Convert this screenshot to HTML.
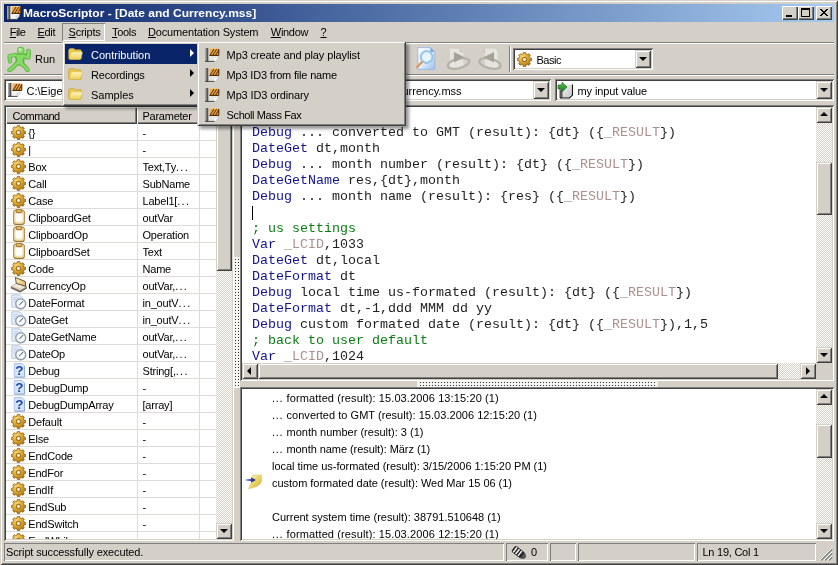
<!DOCTYPE html>
<html><head><meta charset="utf-8"><title>MacroScriptor</title>
<style>
*{box-sizing:border-box;margin:0;padding:0}
html,body{width:838px;height:565px;overflow:hidden;background:#d4d0c8}
body{position:relative;font:11px "Liberation Sans",sans-serif;color:#000}
#root{position:absolute;left:0;top:0;width:838px;height:565px;will-change:transform}
.a{position:absolute}
u{text-decoration:underline;text-underline-offset:1px}
.win{left:0;top:0;width:838px;height:565px;background:#d4d0c8;
 box-shadow:inset 1px 1px #d4d0c8,inset -1px -1px #404040,inset 2px 2px #fff,inset -2px -2px #808080}
.title{left:4px;top:4px;width:830px;height:18px;background:linear-gradient(90deg,#0a246a 0%,#a6caf0 100%)}
.title .t{left:18px;top:1px;color:#fff;font:bold 11px/16px "Liberation Sans",sans-serif;white-space:nowrap;transform:scaleX(1.091);transform-origin:0 0}
.cap{top:6px;width:16px;height:14px;background:#d4d0c8;
 box-shadow:inset 1px 1px #fff,inset -1px -1px #404040,inset -2px -2px #808080}
.menu span{position:absolute;top:26px;line-height:13px;white-space:nowrap}
.sunk1{box-shadow:inset 1px 1px #808080,inset -1px -1px #fff}
.etchh{height:2px;border-top:1px solid #808080;border-bottom:1px solid #fff}
.etchv{width:2px;border-left:1px solid #808080;border-right:1px solid #fff}
.field{background:#fff;box-shadow:inset 1px 1px #808080,inset -1px -1px #fff,inset 2px 2px #404040,inset -2px -2px #d4d0c8}
.btn{background:#d4d0c8;box-shadow:inset 1px 1px #d4d0c8,inset -1px -1px #404040,inset 2px 2px #fff,inset -2px -2px #808080}
.track{background:repeating-conic-gradient(#fff 0 25%,#d4d0c8 0 50%) 0 0/2px 2px}
.arr{width:0;height:0;border:4px solid transparent}
.txt{white-space:nowrap;line-height:13px}
.popup{background:#d4d0c8;box-shadow:inset 1px 1px #d4d0c8,inset -1px -1px #404040,inset 2px 2px #fff,inset -2px -2px #808080,3px 3px 3px rgba(0,0,0,.4)}
.mi{position:absolute;left:2px;height:20px;line-height:20px;white-space:nowrap}
.mi svg{position:absolute;top:2px}
.mi span{top:1px}
.hdr{background:#d4d0c8;height:17px;top:0;box-shadow:inset 1px 1px #fff,inset -1px -1px #404040,inset -2px -2px #808080;line-height:18px;padding-left:6px;white-space:nowrap;overflow:hidden}
.lrow{position:absolute;left:0;width:210px;height:17px;border-bottom:1px solid #dfdcd5;line-height:17px;white-space:nowrap}
.lrow .li{position:absolute;top:1px}
.lrow .ln{position:absolute;left:22.300px;top:1px;letter-spacing:-.2px}
.lrow .lp{position:absolute;left:136.500px;top:1px;width:58px;overflow:hidden;letter-spacing:-.2px}
.vgl{width:1px;background:#dfdcd5}
.cl{position:absolute;left:10px;height:16px;font:13.33px/16px "Liberation Mono",monospace;white-space:pre;color:#222}
.k{color:#14148c}.v{color:#ac9090}.c{color:#0c7c14}
.ol{position:absolute;left:30px;height:17px;line-height:17px;white-space:pre}
.sp{top:543px;height:18px;box-shadow:inset 1px 1px #808080,inset -1px -1px #fff}

</style></head>
<body>
<svg width="0" height="0" style="position:absolute">
<defs>
<linearGradient id="lid" x1="0" y1="0" x2="1" y2="0"><stop offset="0" stop-color="#fbf0b8"/><stop offset="1" stop-color="#e6b460"/></linearGradient>
<pattern id="grip" width="3" height="3" patternUnits="userSpaceOnUse"><rect x="1" y="1" width="1" height="1" fill="#303030"/><rect x="2" y="2" width="1" height="1" fill="#fff"/></pattern>
<radialGradient id="gg" cx=".38" cy=".32" r=".75"><stop offset="0" stop-color="#f6d77c"/><stop offset=".5" stop-color="#dba632"/><stop offset="1" stop-color="#9a6810"/></radialGradient>
<linearGradient id="sp" x1="0" y1="0" x2="1" y2="0"><stop offset="0" stop-color="#b8b8b8"/><stop offset=".55" stop-color="#707070"/><stop offset="1" stop-color="#303030"/></linearGradient>
<linearGradient id="fo" x1="0" y1="0" x2="0" y2="1"><stop offset="0" stop-color="#fff6b8"/><stop offset="1" stop-color="#ecd05c"/></linearGradient>
<radialGradient id="cb" cx=".5" cy=".5" r=".6"><stop offset="0" stop-color="#fffaf0"/><stop offset=".6" stop-color="#f6e6c4"/><stop offset="1" stop-color="#e6c88c"/></radialGradient>
<symbol id="i-gear" viewBox="0 0 15 15">
 <path d="M6.15 1.86L6.37 0.39L8.63 0.39L8.85 1.86L10.53 2.55L11.73 1.68L13.32 3.27L12.45 4.47L13.14 6.15L14.61 6.37L14.61 8.63L13.14 8.85L12.45 10.53L13.32 11.73L11.73 13.32L10.53 12.45L8.85 13.14L8.63 14.61L6.37 14.61L6.15 13.14L4.47 12.45L3.27 13.32L1.68 11.73L2.55 10.53L1.86 8.85L0.39 8.63L0.39 6.37L1.86 6.15L2.55 4.47L1.68 3.27L3.27 1.68L4.47 2.55z" fill="url(#gg)" stroke="#94651a" stroke-width=".8" stroke-linejoin="round"/>
 <circle cx="7.500" cy="7.500" r="2.700" fill="#a9761c"/>
 <circle cx="7.500" cy="7.500" r="1.400" fill="#fffdf0"/>
</symbol>
<symbol id="i-clip" viewBox="0 0 12 16">
 <rect x=".6" y="1.200" width="10.800" height="14.200" rx="1.600" fill="url(#cb)" stroke="#b48a3e" stroke-width="1"/>
 <rect x="2.600" y="4.600" width="6.800" height="8" rx="1" fill="#fffefa"/>
 <path d="M1.200 14.300q.4 1.100 1.500 1.100h6.600q1.100 0 1.500-1.100" fill="none" stroke="#94701f" stroke-width=".9"/>
 <path d="M3 1.200c0-.8.700-.9 1.300-.9h3.400c.6 0 1.300.1 1.300.9L8.200 3.700H3.800z" fill="#dcb566" stroke="#8a5c16" stroke-width=".8" stroke-linejoin="round"/>
</symbol>
<symbol id="i-cur" viewBox="0 0 17 16">
 <path d="M1.200 9.500L10.100 13.400 16.500 9.800V11.400L10.100 15.200 1.200 11.200z" fill="#7c6e60" stroke="#5e5246" stroke-width=".6" stroke-linejoin="round"/>
 <path d="M1.200 9.500L6.300 6.300 16.500 9.800 10.100 13.400z" fill="#f2eadc" stroke="#a4927c" stroke-width=".6" stroke-linejoin="round"/>
 <path d="M4 9.600l5.800 2.300 3.600-2" fill="none" stroke="#d8ccb8" stroke-width=".8"/>
 <path d="M5.300 .5L15.200 4.400 15.800 9.300 6.300 6.300z" fill="url(#lid)" stroke="#4e4434" stroke-width=".9" stroke-linejoin="round"/>
</symbol>
<symbol id="i-clock" viewBox="0 0 17 16">
 <path d="M.8 .8h7.700l2.800 2.800v9.600H.8z" fill="#e4eefa" stroke="#a8bede" stroke-width=".8"/>
 <path d="M2.500 3.800h5M2.500 5.800h3.500M2.500 7.800h2" stroke="#b4c8e6" stroke-width=".8"/>
 <circle cx="9.700" cy="9.800" r="5.900" fill="#c8d0da"/>
 <circle cx="9.700" cy="9.800" r="4.900" fill="#f8fafc" stroke="#8e9cac" stroke-width="1.300"/>
 <path d="M9.700 9.800l2.300-2.700M9.700 9.800l-1.400 1" stroke="#34404c" stroke-width="1" fill="none"/>
</symbol>
<symbol id="i-q" viewBox="0 0 16 16">
 <path d="M4.300 1.500h7.700l2.500 2.500v11.200H4.300z" fill="#d6e4fa" stroke="#9cb8e4" stroke-width=".8"/>
 <path d="M14.500 4.500v10.700H5" fill="none" stroke="#86a4d6" stroke-width=".8"/>
 <text x="9.300" y="13.300" text-anchor="middle" font-family="Liberation Sans, sans-serif" font-weight="bold" font-size="13.500" fill="#1848ac">?</text>
</symbol>
<symbol id="i-folder" viewBox="0 0 15 12">
 <path d="M.6 3.200c0-1.500.6-2.500 2-2.700h2.600c.9 0 1.400.5 1.800 1.300h5c.8 0 1.300.5 1.300 1.300v6.600c0 1-.5 1.700-1.500 1.700H2.200c-1 0-1.600-.6-1.600-1.600z" fill="#e8c850" stroke="#c09a28" stroke-width=".6"/>
 <path d="M1.300 10.300L2.800 4.800c.2-.7.600-1 1.300-1h9.400c.7 0 1 .4.800 1.100l-1.300 5.300c-.2.700-.6 1.100-1.400 1.100H2.200c-.7 0-1-.4-.9-1z" fill="url(#fo)" stroke="#d8b440" stroke-width=".5"/>
</symbol>
<symbol id="i-mss" viewBox="0 0 15 14">
 <path d="M3 0h9.500v10L9.500 13.500H3z" fill="#e6e6e2"/>
 <rect x="0" y="0" width="3.300" height="13.800" fill="url(#sp)"/>
 <path d="M0 13.400h9.500" stroke="#3a3a3a" stroke-width=".9"/>
 <rect x="4.500" y=".5" width="9.300" height="7.200" fill="#f2ac4c"/>
 <path d="M5 7.500l4-6.500M7.700 7.500l4-6.500M10.400 7.500l3.300-5.400" stroke="#6a3c08" stroke-width="1.100"/>
 <path d="M4.500 7.400h9.300V1" fill="none" stroke="#3c2206" stroke-width="1"/>
 <path d="M9.300 13.200v-3.200h3.200z" fill="#fff"/>
</symbol>
<symbol id="i-mssw" viewBox="0 0 15 14">
 <path d="M3 0h9.500v10L9.500 13.500H3z" fill="#f4f4f0"/>
 <rect x="0" y="0" width="3.300" height="13.800" fill="url(#sp)"/>
 <path d="M0 13.400h9.500" stroke="#3a3a3a" stroke-width=".9"/>
 <rect x="4.500" y=".5" width="9.300" height="7.200" fill="#f2ac4c"/>
 <path d="M5 7.500l4-6.500M7.700 7.500l4-6.500M10.400 7.500l3.300-5.400" stroke="#6a3c08" stroke-width="1.100"/>
 <path d="M4.500 7.400h9.300V1" fill="none" stroke="#3c2206" stroke-width="1"/>
 <path d="M9.300 13.200v-3.200h3.200z" fill="#fff" stroke="#889" stroke-width=".4"/>
</symbol>
</defs>
</svg>

<div id="root">
<div class="a win"></div>
<!-- title bar -->
<div class="a title">
 <svg class="a" style="left:3px;top:2px" width="15" height="14"><use href="#i-mssw"/></svg>
 <div class="a t" style="left:19px">MacroScriptor - [Date and Currency.mss]</div>
</div>
<div class="a cap" style="left:782px"><div class="a" style="left:4px;top:9px;width:6px;height:2px;background:#000"></div></div>
<div class="a cap" style="left:798px"><div class="a" style="left:3px;top:2px;width:9px;height:9px;border:1px solid #000;border-top-width:2px"></div></div>
<div class="a cap" style="left:816px"><svg class="a" style="left:4px;top:3px" width="8" height="7"><path d="M0 0l7 7M1 0l7 7M7 0l-7 7M8 0l-7 7" stroke="#000" stroke-width="1"/></svg></div>
<!-- menu bar -->
<div class="a sunk1" style="left:62px;top:23px;width:43px;height:18px"></div>
<div class="menu">
 <span style="left:9.700px;letter-spacing:-.5px"><u>F</u>ile</span>
 <span style="left:37.500px;letter-spacing:-.3px"><u>E</u>dit</span>
 <span style="left:68.600px;letter-spacing:-.25px"><u>S</u>cripts</span>
 <span style="left:112px;letter-spacing:-.3px"><u>T</u>ools</span>
 <span style="left:148px;letter-spacing:-.17px"><u>D</u>ocumentation System</span>
 <span style="left:270.800px;letter-spacing:-.3px"><u>W</u>indow</span>
 <span style="left:320.500px"><u>?</u></span>
</div>
<div class="a etchh" style="left:4px;top:42px;width:830px"></div>
<!-- toolbar 1 -->
<svg class="a" style="left:7px;top:46px" width="26" height="26" viewBox="0 0 26 26">
 <g fill="none" stroke="#5cb83e" stroke-linecap="round" stroke-linejoin="round">
  <path d="M8.500 9L2.500 10 3 15.500" stroke-width="4.200"/>
  <path d="M16 10l5.500 1.500L21.500 5" stroke-width="4.600"/>
  <path d="M10 17L6 21.500 2.500 24.200" stroke-width="4.400"/>
  <path d="M13 17l5 3.500 2.500 3.500" stroke-width="4.400"/>
 </g>
 <path d="M8 8h10.500l-2 6 .5 5H8.500l1-5z" fill="#5cb83e" stroke="#5cb83e" stroke-width="1.500" stroke-linejoin="round"/>
 <circle cx="13.800" cy="4.400" r="3.700" fill="#5cb83e"/>
 <g fill="none" stroke="#86d868" stroke-linecap="round" stroke-linejoin="round">
  <path d="M8.500 9L2.500 10 3 15.500" stroke-width="2.400"/>
  <path d="M16 10l5.500 1.500L21.500 5" stroke-width="2.800"/>
  <path d="M10 17L6 21.500 2.500 24.200" stroke-width="2.600"/>
  <path d="M13 17l5 3.500 2.500 3.500" stroke-width="2.600"/>
 </g>
 <path d="M9 8.800h8.500l-2 5.500.5 4H9.500l1-4z" fill="#86d868"/>
 <circle cx="13.800" cy="4.400" r="2.800" fill="#90de72"/>
 <circle cx="13" cy="3.600" r="1.400" fill="#c0f2ae"/>
</svg>
<div class="a txt" style="left:35px;top:53px">Run</div>
<!-- toolbar icons right -->
<svg class="a" style="left:415px;top:46px" width="22" height="26" viewBox="0 0 22 26">
 <defs><linearGradient id="pg1" x1="0" y1="0" x2="1" y2="1"><stop offset="0" stop-color="#fff"/><stop offset=".5" stop-color="#e4eefc"/><stop offset="1" stop-color="#9cc0f0"/></linearGradient></defs>
 <path d="M2.800 1.600h12.500l4.500 4.500v17.200H2.800z" fill="url(#pg1)" stroke="#8fb2e8" stroke-width=".8"/>
 <path d="M15.300 1.600v4.500h4.500z" fill="#7fa6e4"/>
 <circle cx="11.600" cy="11" r="5.600" fill="#e6f6fc" stroke="#9ccbe8" stroke-width="1.700"/>
 <circle cx="11.600" cy="11" r="6.500" fill="none" stroke="#7fa8d8" stroke-width=".5"/>
 <path d="M6.800 16L2 21" stroke="#e0a060" stroke-width="2" stroke-linecap="round"/>
 <path d="M7.300 16.500L2.500 21.500" stroke="#b87838" stroke-width=".7" stroke-linecap="round"/>
</svg>
<svg class="a" style="left:446px;top:46px" width="26" height="26" viewBox="0 0 26 26">
 <path d="M3.500 2.200h10.500l3.800 3.800v17H3.500z" fill="#e6e4de" stroke="#d0ccc4" stroke-width=".6"/>
 <path d="M14 2.200v3.800h3.800" fill="#d6d2ca" stroke="#bcb8b0" stroke-width=".6"/>
 <ellipse cx="12.500" cy="17.500" rx="11" ry="4.800" fill="none" stroke="#b6b2a8" stroke-width="2.200" transform="rotate(-14 12.500 17.500)"/>
 <path d="M8 6l10.500 5.200L8 16.500z" fill="#a6a298"/>
</svg>
<svg class="a" style="left:477px;top:46px" width="26" height="26" viewBox="0 0 26 26">
 <path d="M7.500 2.200H18l3 3v17.800H7.500z" fill="#e6e4de" stroke="#d0ccc4" stroke-width=".6"/>
 <path d="M7.500 2.200v3.800H4.200" fill="#d6d2ca" stroke="#bcb8b0" stroke-width=".6"/>
 <ellipse cx="13" cy="17.500" rx="11" ry="4.800" fill="none" stroke="#b6b2a8" stroke-width="2.200" transform="rotate(14 13 17.500)"/>
 <path d="M17 6L6.500 11.200 17 16.500z" fill="#a6a298"/>
</svg>
<div class="a etchv" style="left:509px;top:46px;height:26px"></div>
<div class="a field" style="left:513px;top:48px;width:140px;height:22px">
 <svg class="a" style="left:4px;top:4px" width="15" height="15"><use href="#i-gear"/></svg>
 <div class="a txt" style="left:23.500px;top:6px;letter-spacing:-.5px">Basic</div>
 <div class="a btn" style="left:122px;top:2px;width:16px;height:18px"><div class="a arr" style="left:4px;top:7px;border-top-color:#000;border-bottom-width:0"></div></div>
</div>
<div class="a etchh" style="left:4px;top:74px;width:830px"></div>
<!-- toolbar 2 -->
<div class="a field" style="left:4px;top:79px;width:547px;height:22px">
 <svg class="a" style="left:4px;top:4px" width="15" height="14"><use href="#i-mssw"/></svg>
 <div class="a txt" style="left:22.500px;top:6px">C:\Eigene Dateien\MacroScriptor\Scripts\Samples\Date Currency\Date and Currency.mss</div>
 <div class="a btn" style="left:529px;top:2px;width:16px;height:18px"><div class="a arr" style="left:4px;top:7px;border-top-color:#000;border-bottom-width:0"></div></div>
</div>
<div class="a field" style="left:555px;top:79px;width:279px;height:22px">
 <svg class="a" style="left:2px;top:2px" width="18" height="18" viewBox="0 0 18 18">
  <defs><linearGradient id="pg2" x1="0" y1="0" x2="1" y2="1"><stop offset="0" stop-color="#f4f4f4"/><stop offset="1" stop-color="#c4c4c4"/></linearGradient>
  <linearGradient id="ga" x1="0" y1="0" x2="0" y2="1"><stop offset="0" stop-color="#58c458"/><stop offset="1" stop-color="#1c7a1c"/></linearGradient></defs>
  <path d="M2.500 3.500H15.500V14l-3 3H2.500z" fill="url(#pg2)"/>
  <rect x="2.500" y="8.500" width="3" height="8.500" fill="#5a5a5a"/>
  <path d="M12.700 16.800v-2.800h2.800z" fill="#fff"/>
  <path d="M15.500 3.500V14l-3 3H3" fill="none" stroke="#141414" stroke-width="1.100"/>
  <path d="M1 4h4V1.300l5 4.700-5 4.700V8H1z" fill="url(#ga)" stroke="#1c6a1c" stroke-width=".7" stroke-linejoin="round"/>
 </svg>
 <div class="a txt" style="left:22.500px;top:6px;letter-spacing:-.1px">my input value</div>
 <div class="a btn" style="left:261px;top:2px;width:16px;height:18px"><div class="a arr" style="left:4px;top:7px;border-top-color:#000;border-bottom-width:0"></div></div>
</div>
<!-- left list panel -->
<div class="a field" style="left:4px;top:105px;width:230px;height:436px;overflow:hidden">
 <div class="a" style="left:2px;top:2px;width:210px;height:17px">
  <div class="a hdr" style="left:0;width:131px;letter-spacing:-.5px;padding-left:6.500px">Command</div>
  <div class="a hdr" style="left:131px;width:62px;letter-spacing:-.25px;padding-left:5.500px">Parameter</div>
  <div class="a hdr" style="left:193px;width:17px;padding:0"></div>
 </div>
 <div class="a" style="left:2px;top:19px;width:210px;height:415px;overflow:hidden">
<div class="lrow" style="top:0px"><svg class="li" style="left:5px;top:1px" width="15" height="15"><use href="#i-gear"/></svg><span class="ln">{}</span><span class="lp">-</span></div>
<div class="lrow" style="top:17px"><svg class="li" style="left:5px;top:1px" width="15" height="15"><use href="#i-gear"/></svg><span class="ln">|</span><span class="lp">-</span></div>
<div class="lrow" style="top:34px"><svg class="li" style="left:5px;top:1px" width="15" height="15"><use href="#i-gear"/></svg><span class="ln">Box</span><span class="lp">Text,Ty<span style="letter-spacing:1.3px">...</span></span></div>
<div class="lrow" style="top:51px"><svg class="li" style="left:5px;top:1px" width="15" height="15"><use href="#i-gear"/></svg><span class="ln">Call</span><span class="lp">SubName</span></div>
<div class="lrow" style="top:68px"><svg class="li" style="left:5px;top:1px" width="15" height="15"><use href="#i-gear"/></svg><span class="ln">Case</span><span class="lp">Label1[<span style="letter-spacing:1.3px">...</span></span></div>
<div class="lrow" style="top:85px"><svg class="li" style="left:7px;top:0px" width="12" height="16"><use href="#i-clip"/></svg><span class="ln">ClipboardGet</span><span class="lp">outVar</span></div>
<div class="lrow" style="top:102px"><svg class="li" style="left:7px;top:0px" width="12" height="16"><use href="#i-clip"/></svg><span class="ln">ClipboardOp</span><span class="lp">Operation</span></div>
<div class="lrow" style="top:119px"><svg class="li" style="left:7px;top:0px" width="12" height="16"><use href="#i-clip"/></svg><span class="ln">ClipboardSet</span><span class="lp">Text</span></div>
<div class="lrow" style="top:136px"><svg class="li" style="left:5px;top:1px" width="15" height="15"><use href="#i-gear"/></svg><span class="ln">Code</span><span class="lp">Name</span></div>
<div class="lrow" style="top:153px"><svg class="li" style="left:4px;top:0px" width="17" height="16"><use href="#i-cur"/></svg><span class="ln">CurrencyOp</span><span class="lp">outVar,<span style="letter-spacing:1.3px">...</span></span></div>
<div class="lrow" style="top:170px"><svg class="li" style="left:5px;top:0px" width="17" height="16"><use href="#i-clock"/></svg><span class="ln">DateFormat</span><span class="lp">in_outV<span style="letter-spacing:1.3px">...</span></span></div>
<div class="lrow" style="top:187px"><svg class="li" style="left:5px;top:0px" width="17" height="16"><use href="#i-clock"/></svg><span class="ln">DateGet</span><span class="lp">in_outV<span style="letter-spacing:1.3px">...</span></span></div>
<div class="lrow" style="top:204px"><svg class="li" style="left:5px;top:0px" width="17" height="16"><use href="#i-clock"/></svg><span class="ln">DateGetName</span><span class="lp">outVar,<span style="letter-spacing:1.3px">...</span></span></div>
<div class="lrow" style="top:221px"><svg class="li" style="left:5px;top:0px" width="17" height="16"><use href="#i-clock"/></svg><span class="ln">DateOp</span><span class="lp">outVar,<span style="letter-spacing:1.3px">...</span></span></div>
<div class="lrow" style="top:238px"><svg class="li" style="left:4px;top:0px" width="16" height="16"><use href="#i-q"/></svg><span class="ln">Debug</span><span class="lp">String[,<span style="letter-spacing:1.3px">...</span></span></div>
<div class="lrow" style="top:255px"><svg class="li" style="left:4px;top:0px" width="16" height="16"><use href="#i-q"/></svg><span class="ln">DebugDump</span><span class="lp">-</span></div>
<div class="lrow" style="top:272px"><svg class="li" style="left:4px;top:0px" width="16" height="16"><use href="#i-q"/></svg><span class="ln">DebugDumpArray</span><span class="lp">[array]</span></div>
<div class="lrow" style="top:289px"><svg class="li" style="left:5px;top:1px" width="15" height="15"><use href="#i-gear"/></svg><span class="ln">Default</span><span class="lp">-</span></div>
<div class="lrow" style="top:306px"><svg class="li" style="left:5px;top:1px" width="15" height="15"><use href="#i-gear"/></svg><span class="ln">Else</span><span class="lp">-</span></div>
<div class="lrow" style="top:323px"><svg class="li" style="left:5px;top:1px" width="15" height="15"><use href="#i-gear"/></svg><span class="ln">EndCode</span><span class="lp">-</span></div>
<div class="lrow" style="top:340px"><svg class="li" style="left:5px;top:1px" width="15" height="15"><use href="#i-gear"/></svg><span class="ln">EndFor</span><span class="lp">-</span></div>
<div class="lrow" style="top:357px"><svg class="li" style="left:5px;top:1px" width="15" height="15"><use href="#i-gear"/></svg><span class="ln">EndIf</span><span class="lp">-</span></div>
<div class="lrow" style="top:374px"><svg class="li" style="left:5px;top:1px" width="15" height="15"><use href="#i-gear"/></svg><span class="ln">EndSub</span><span class="lp">-</span></div>
<div class="lrow" style="top:391px"><svg class="li" style="left:5px;top:1px" width="15" height="15"><use href="#i-gear"/></svg><span class="ln">EndSwitch</span><span class="lp">-</span></div>
<div class="lrow" style="top:408px"><svg class="li" style="left:5px;top:1px" width="15" height="15"><use href="#i-gear"/></svg><span class="ln">EndWhile</span><span class="lp">-</span></div>
  <div class="a vgl" style="left:131px;top:0;height:415px"></div>
  <div class="a vgl" style="left:193px;top:0;height:415px"></div>
 </div>
 <div class="a track" style="left:212px;top:2px;width:16px;height:432px">
  <div class="a btn" style="left:0;top:0;width:16px;height:16px"><div class="a arr" style="left:4px;top:5px;border-bottom-color:#000;border-top-width:0"></div></div>
  <div class="a btn" style="left:0;top:17px;width:16px;height:147px"></div>
  <div class="a btn" style="left:0;top:416px;width:16px;height:16px"><div class="a arr" style="left:4px;top:6px;border-top-color:#000;border-bottom-width:0"></div></div>
 </div>
</div>
<!-- vertical splitter grip -->
<div class="a" style="left:234px;top:257px;width:6px;height:131px;background:#f4f3f0"></div>
<svg class="a" style="left:234px;top:258px" width="6" height="129" shape-rendering="crispEdges"><rect width="6" height="129" fill="url(#grip)"/></svg>
<!-- editor -->
<div class="a field" style="left:240px;top:105px;width:594px;height:276px;overflow:hidden">
 <div class="a" style="left:2px;top:2px;width:574px;height:256px;overflow:hidden">
  <div class="a" style="left:0;top:2px;width:574px;height:256px">
<div class="cl" style="top:0px"></div>
<div class="cl" style="top:16px"><span class="k">Debug</span> ... converted to GMT (result): {dt} ({<span class="v">_RESULT</span>})</div>
<div class="cl" style="top:32px"><span class="k">DateGet</span> dt,month</div>
<div class="cl" style="top:48px"><span class="k">Debug</span> ... month number (result): {dt} ({<span class="v">_RESULT</span>})</div>
<div class="cl" style="top:64px"><span class="k">DateGetName</span> res,{dt},month</div>
<div class="cl" style="top:80px"><span class="k">Debug</span> ... month name (result): {res} ({<span class="v">_RESULT</span>})</div>
<div class="cl" style="top:96px"></div>
<div class="cl" style="top:112px"><span class="c">; us settings</span></div>
<div class="cl" style="top:128px"><span class="k">Var</span> <span class="v">_LCID</span>,1033</div>
<div class="cl" style="top:144px"><span class="k">DateGet</span> dt,local</div>
<div class="cl" style="top:160px"><span class="k">DateFormat</span> dt</div>
<div class="cl" style="top:176px"><span class="k">Debug</span> local time us-formated (result): {dt} ({<span class="v">_RESULT</span>})</div>
<div class="cl" style="top:192px"><span class="k">DateFormat</span> dt,-1,ddd MMM dd yy</div>
<div class="cl" style="top:208px"><span class="k">Debug</span> custom formated date (result): {dt} ({<span class="v">_RESULT</span>}),1,5</div>
<div class="cl" style="top:224px"><span class="c">; back to user default</span></div>
<div class="cl" style="top:240px"><span class="k">Var</span> <span class="v">_LCID</span>,1024</div>
  </div>
  <div class="a" style="left:10px;top:99px;width:1px;height:14px;background:#000"></div>
 </div>
 <div class="a track" style="left:576px;top:2px;width:16px;height:256px">
  <div class="a btn" style="left:0;top:0;width:16px;height:16px"><div class="a arr" style="left:4px;top:5px;border-bottom-color:#000;border-top-width:0"></div></div>
  <div class="a btn" style="left:0;top:55px;width:16px;height:53px"></div>
  <div class="a btn" style="left:0;top:240px;width:16px;height:16px"><div class="a arr" style="left:4px;top:6px;border-top-color:#000;border-bottom-width:0"></div></div>
 </div>
 <div class="a" style="left:576px;top:258px;width:16px;height:16px;background:#d4d0c8"></div>
 <div class="a track" style="left:2px;top:258px;width:574px;height:16px">
  <div class="a btn" style="left:0;top:0;width:16px;height:16px"><div class="a arr" style="left:5px;top:4px;border-right-color:#000;border-left-width:0"></div></div>
  <div class="a btn" style="left:16px;top:0;width:520px;height:16px"></div>
  <div class="a btn" style="left:558px;top:0;width:16px;height:16px"><div class="a arr" style="left:6px;top:4px;border-left-color:#000;border-right-width:0"></div></div>
 </div>
</div>
<!-- horizontal splitter grip -->
<div class="a" style="left:417px;top:381px;width:241px;height:6px;background:#f4f3f0"></div>
<svg class="a" style="left:419px;top:381px" width="237" height="6" shape-rendering="crispEdges"><rect width="237" height="6" fill="url(#grip)"/></svg>
<!-- output panel -->
<div class="a field" style="left:240px;top:387px;width:594px;height:154px;overflow:hidden">
 <div class="a" style="left:2px;top:2px;width:574px;height:150px;overflow:hidden">
<div class="ol" style="top:1px;letter-spacing:0.115px"><span style="letter-spacing:.75px">...</span> formatted (result): 15.03.2006 13:15:20 (1)</div>
<div class="ol" style="top:18px;letter-spacing:0.035px"><span style="letter-spacing:.75px">...</span> converted to GMT (result): 15.03.2006 12:15:20 (1)</div>
<div class="ol" style="top:35px"><span style="letter-spacing:.75px">...</span> month number (result): 3 (1)</div>
<div class="ol" style="top:52px;letter-spacing:-0.06px"><span style="letter-spacing:.75px">...</span> month name (result): März (1)</div>
<div class="ol" style="top:69px;letter-spacing:-0.025px">local time us-formated (result): 3/15/2006 1:15:20 PM (1)</div>
<div class="ol" style="top:86px;letter-spacing:-0.027px">custom formated date (result): Wed Mar 15 06 (1)</div>
<div class="ol" style="top:103px"></div>
<div class="ol" style="top:120px">Current system time (result): 38791.510648 (1)</div>
<div class="ol" style="top:137px;letter-spacing:0.115px"><span style="letter-spacing:.75px">...</span> formatted (result): 15.03.2006 12:15:20 (1)</div>
  <svg class="a" style="left:3px;top:85px" width="18" height="16" viewBox="0 0 18 16">
   <defs><linearGradient id="yp" x1="0" y1="0" x2="1" y2="1"><stop offset="0" stop-color="#fdf6b0"/><stop offset="1" stop-color="#d4b02c"/></linearGradient>
   <linearGradient id="ba" x1="0" y1="0" x2="1" y2="0"><stop offset="0" stop-color="#b8c8f8"/><stop offset=".5" stop-color="#3a4cb0"/><stop offset="1" stop-color="#101848"/></linearGradient></defs>
   <path d="M7.500 1.200L16.500 1v6.500Q15 13 3.500 14.700 7 9.500 7.500 1.200z" fill="url(#yp)" stroke="#d8c05a" stroke-width=".5"/>
   <path d="M.5 5h5.500V3.200L10.800 6 6 8.800V7H.5z" fill="url(#ba)"/>
  </svg>
 </div>
 <div class="a track" style="left:576px;top:2px;width:16px;height:150px">
  <div class="a btn" style="left:0;top:0;width:16px;height:16px"><div class="a arr" style="left:4px;top:5px;border-bottom-color:#000;border-top-width:0"></div></div>
  <div class="a btn" style="left:0;top:35px;width:16px;height:34px"></div>
  <div class="a btn" style="left:0;top:134px;width:16px;height:16px"><div class="a arr" style="left:4px;top:6px;border-top-color:#000;border-bottom-width:0"></div></div>
 </div>
</div>
<!-- status bar -->
<div class="a sp" style="left:4px;width:500px"><div class="a txt" style="left:2px;top:3px;letter-spacing:-.14px">Script successfully executed.</div></div>
<div class="a sp" style="left:506px;width:42px">
 <svg class="a" style="left:5px;top:2px" width="17" height="15" viewBox="0 0 17 15">
  <g transform="rotate(38 8 7.500)">
   <rect x="1" y="4" width="11.500" height="7.400" rx="1.500" fill="#262626"/>
   <path d="M12.500 4.300l3.300 2.200v2.400l-3.300 2.200z" fill="#5a5a5a" stroke="#262626" stroke-width=".6"/>
   <path d="M3.300 4.600v6.200M6.300 4.600v6.200M9.300 4.600v6.200" stroke="#f4f4f4" stroke-width="1.500"/>
  </g>
 </svg>
 <div class="a txt" style="left:25px;top:3px">0</div></div>
<div class="a sp" style="left:550px;width:26px"></div>
<div class="a sp" style="left:578px;width:117px"></div>
<div class="a sp" style="left:697px;width:119px"><div class="a txt" style="left:5.500px;top:3px;letter-spacing:-.25px">Ln 19, Col 1</div></div>
<svg class="a" style="left:820px;top:548px" width="13" height="13"><path d="M12 1L1 12M12 5L5 12M12 9L9 12" stroke="#808080" stroke-width="2"/><path d="M12 0L0 12M12 4L4 12M12 8L8 12" stroke="#fff" stroke-width="1"/></svg>
<!-- popup menus -->
<div class="a popup" style="left:62px;top:41px;width:138px;height:65px">
 <div class="a" style="left:3px;top:3px;width:132px;height:20px;background:#0a246a"></div>
 <div class="mi" style="top:3px;color:#fff"><svg style="left:4px;top:4px" width="15" height="12"><use href="#i-folder"/></svg><span style="position:absolute;left:27px">Contribution</span></div>
 <div class="mi" style="top:23px"><svg style="left:4px;top:4px" width="15" height="12"><use href="#i-folder"/></svg><span style="position:absolute;left:27px;letter-spacing:-.2px">Recordings</span></div>
 <div class="mi" style="top:43px"><svg style="left:4px;top:4px" width="15" height="12"><use href="#i-folder"/></svg><span style="position:absolute;left:27px">Samples</span></div>
 <div class="a arr" style="left:128px;top:8px;border-left-color:#fff;border-right-width:0"></div>
 <div class="a arr" style="left:128px;top:28px;border-left-color:#000;border-right-width:0"></div>
 <div class="a arr" style="left:128px;top:48px;border-left-color:#000;border-right-width:0"></div>
</div>
<div class="a popup" style="left:197px;top:41px;width:209px;height:85px">
 <div class="mi" style="left:3px;top:3px"><svg style="left:5px;top:4px" width="15" height="14"><use href="#i-mss"/></svg><span style="position:absolute;left:26.600px;letter-spacing:-.107px">Mp3 create and play playlist</span></div>
 <div class="mi" style="left:3px;top:23px"><svg style="left:5px;top:4px" width="15" height="14"><use href="#i-mss"/></svg><span style="position:absolute;left:26.600px;letter-spacing:-.18px">Mp3 ID3 from file name</span></div>
 <div class="mi" style="left:3px;top:43px"><svg style="left:5px;top:4px" width="15" height="14"><use href="#i-mss"/></svg><span style="position:absolute;left:26.600px;letter-spacing:-.125px">Mp3 ID3 ordinary</span></div>
 <div class="mi" style="left:3px;top:63px"><svg style="left:5px;top:4px" width="15" height="14"><use href="#i-mss"/></svg><span style="position:absolute;left:26.600px;letter-spacing:-.4px">Scholl Mass Fax</span></div>
</div>

</div>
</body></html>
